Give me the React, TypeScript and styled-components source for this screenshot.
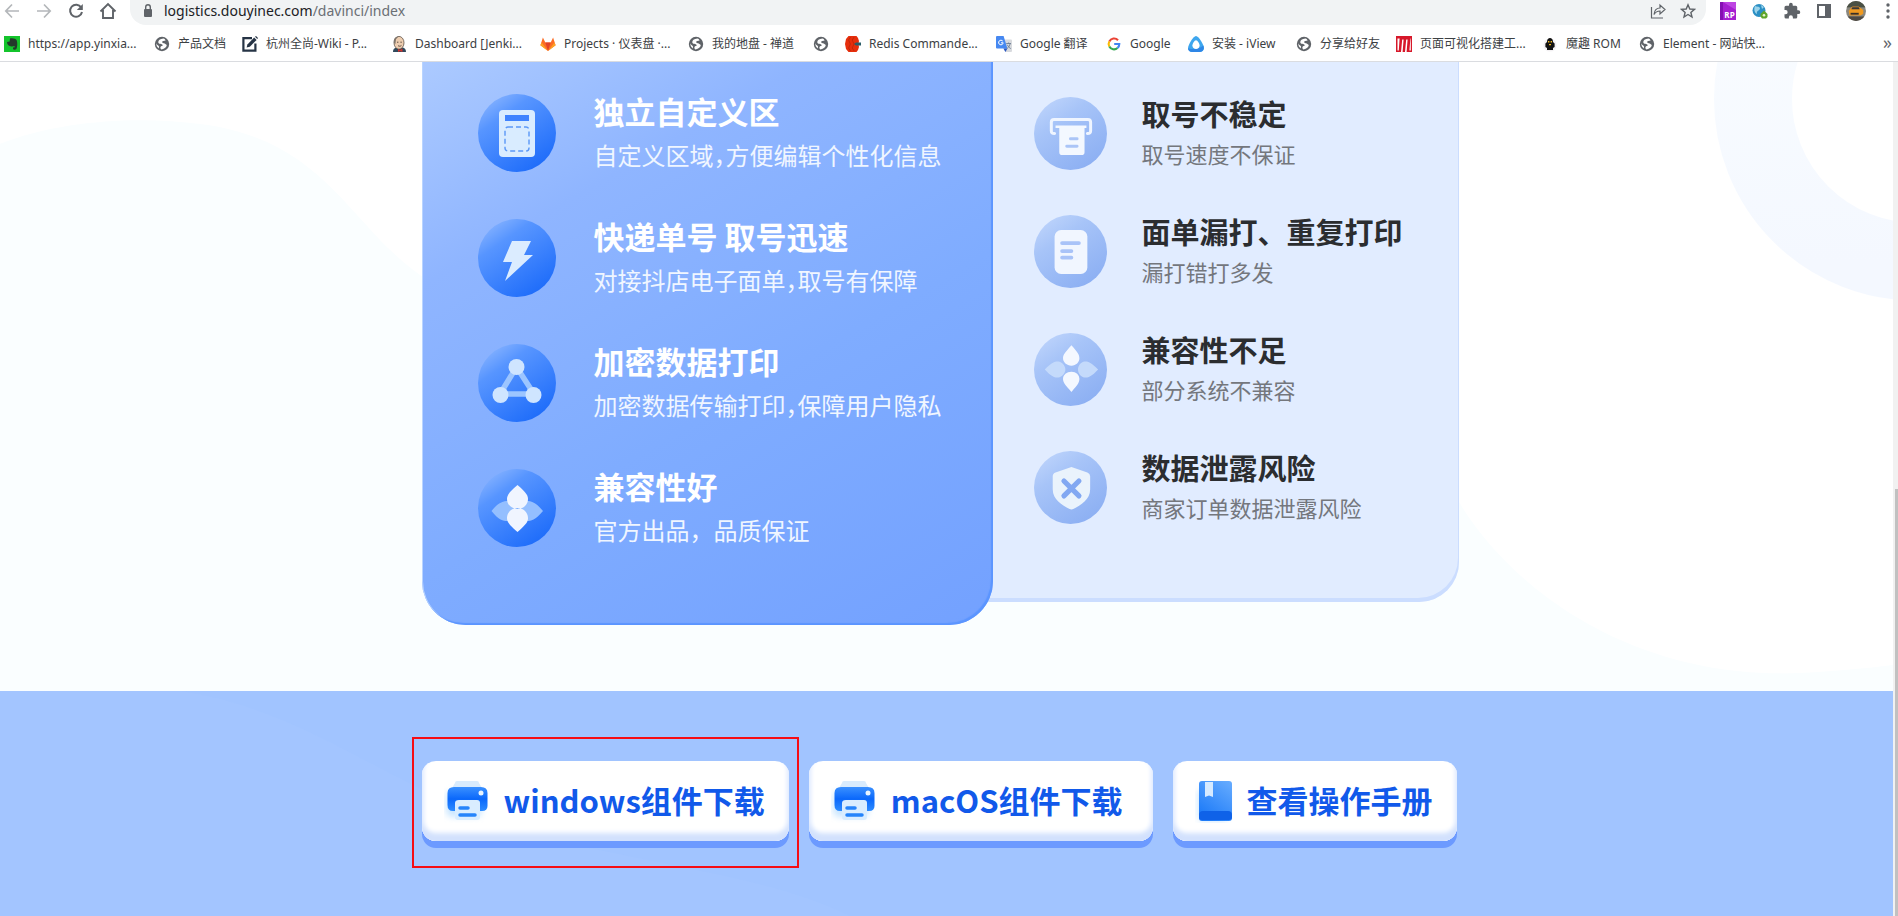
import React from 'react';
import styled, { createGlobalStyle } from 'styled-components';

const Global = createGlobalStyle`
  * { box-sizing: border-box; }
  html, body, #root { height: 100%; }
  body { margin: 0; overflow: hidden; background: #fff; font-family: "Noto Sans", "Noto Sans CJK SC", sans-serif; }
`;

const Page = styled.div`
  display: flex;
  flex-direction: column;
  height: 100%;
`;

const Toolbar = styled.header`
  display: flex;
  align-items: flex-start;
  height: 25px;
  background: #fff;
`;

const NavGroup = styled.nav`
  display: flex;
  gap: 12px;
  padding: 1px 12px 0 2px;
`;

const IconButton = styled.button`
  display: flex;
  align-items: center;
  justify-content: center;
  width: 20px;
  height: 20px;
  padding: 0;
  border: 0;
  background: none;
  color: #5f6368;
`;

const AddressBar = styled.form`
  display: flex;
  flex: 1;
  gap: 10px;
  height: 25px;
  margin: 0;
  padding: 0 8px 3px 12px;
  align-items: center;
  border-radius: 0 0 16px 16px;
  background: #f1f3f4;
`;

const AddressText = styled.a`
  flex: 1;
  font-family: "Noto Sans", sans-serif;
  font-size: 14px;
  line-height: 20px;
  color: #202124;
  text-decoration: none;
  span { color: #6b6f74; }
`;

const Extensions = styled.div`
  display: flex;
  align-items: center;
  gap: 12px;
  padding: 1px 0 0 12px;
`;

const Bookmarks = styled.nav`
  display: flex;
  align-items: center;
  height: 37px;
  padding: 1px 4px 0;
  border-bottom: 1px solid #dadce0;
  background: #fff;
`;

const Bookmark = styled.a<{ $width: number }>`
  display: flex;
  flex: 0 0 ${p => p.$width}px;
  align-items: center;
  gap: 8px;
  font-family: "Noto Sans", "Noto Sans CJK SC", sans-serif;
  font-size: 12px;
  line-height: 18px;
  white-space: nowrap;
  color: #3c4043;
  text-decoration: none;
  svg { flex: none; }
`;

const More = styled.button`
  margin-left: auto;
  padding: 0 2px 4px;
  border: 0;
  background: none;
  font-family: "Open Sans", sans-serif;
  font-size: 18px;
  line-height: 20px;
  color: #5f6368;
`;

const Viewport = styled.div`
  display: flex;
  flex: 1;
  min-height: 0;
`;

const Content = styled.div`
  display: flex;
  flex: 1;
  flex-direction: column;
  min-width: 0;
`;

const ScrollTrack = styled.div`
  display: flex;
  flex: 0 0 5px;
  flex-direction: column;
  justify-content: flex-end;
  background: #f1f1f1;
`;

const ScrollThumb = styled.div`
  height: 50%;
  margin-left: 2px;
  background: #c1c1c1;
`;

const Compare = styled.main`
  position: relative;
  padding-bottom: 66px;
`;

const Backdrop = styled.svg`
  position: absolute;
  inset: 0;
  width: 100%;
  height: 100%;
`;

const Container = styled.div`
  position: relative;
  display: flex;
  align-items: flex-start;
  width: 1050px;
  margin: 0 auto;
`;

const Card = styled.section<{ $strong?: boolean }>`
  position: relative;
  z-index: ${p => (p.$strong ? 1 : 0)};
  display: flex;
  flex-direction: column;
  width: ${p => (p.$strong ? 571 : 506)}px;
  margin-left: ${p => (p.$strong ? 0 : -40)}px;
  padding: ${p => (p.$strong ? '8px 0 55px 56px' : '12px 0 56px 81px')};
  border-radius: ${p => (p.$strong ? '0 0 44px 44px' : '0 0 40px 0')};
  background: ${p =>
    p.$strong ? 'linear-gradient(150deg, #accaff 0%, #8fb5ff 25%, #7facff 58%, #73a1ff 100%)' : '#e1ecff'};
  box-shadow: ${p =>
    p.$strong
      ? 'inset -2px -2px 1px #5b95ff, inset 1px 0 0 #b9d4ff'
      : 'inset -1px -4px 0 #cbddff'};
`;

const Feature = styled.article<{ $strong?: boolean }>`
  display: flex;
  align-items: center;
  gap: ${p => (p.$strong ? 38 : 35)}px;
  height: ${p => (p.$strong ? 125 : 118)}px;
`;

const FeatureIcon = styled.svg<{ $strong?: boolean }>`
  flex: none;
  width: ${p => (p.$strong ? 78 : 73)}px;
  height: ${p => (p.$strong ? 78 : 73)}px;
`;

const FeatureText = styled.div`
  display: flex;
  flex-direction: column;
  padding-bottom: 4px;
`;

const FeatureTitle = styled.h3<{ $strong?: boolean }>`
  margin: 0;
  font-family: "Noto Sans CJK SC", sans-serif;
  font-size: ${p => (p.$strong ? 31 : 29)}px;
  font-weight: 700;
  line-height: ${p => (p.$strong ? 48 : 44)}px;
  color: ${p => (p.$strong ? '#fff' : '#2b2d30')};
`;

const FeatureNote = styled.p<{ $strong?: boolean; $tight?: boolean }>`
  margin: 0;
  font-family: "Noto Sans CJK SC", sans-serif;
  font-size: ${p => (p.$strong ? 24 : 22)}px;
  line-height: ${p => (p.$strong ? 40 : 36)}px;
  font-feature-settings: ${p => (p.$tight ? '"halt"' : 'normal')};
  color: ${p => (p.$strong ? '#f0f6ff' : '#74777d')};
`;

const DownloadBand = styled.footer`
  position: relative;
  flex: 1;
  padding-top: 70px;
  background: #a1c4ff;
`;

const Actions = styled(Container)`
  gap: 20px;
`;

const ActionButton = styled.button<{ $roomy?: boolean }>`
  position: relative;
  display: flex;
  align-items: center;
  gap: 14px;
  height: 80px;
  padding: 0 ${p => (p.$roomy ? 30 : 24)}px 2px 22px;
  border: 0;
  border-radius: 14px;
  background: #fff;
  box-shadow: 0 7px 0 #6c9aff, inset 0 -8px 5px #d2e1fd, inset 3px -4px 4px #f1f6ff, inset -3px -4px 4px #f1f6ff;
  font-family: "Noto Sans CJK SC", sans-serif;
  font-size: 31px;
  font-weight: 700;
  line-height: 48px;
  white-space: nowrap;
  color: #1159ea;
  svg { flex: none; }
`;

const Highlight = styled.div`
  position: absolute;
  inset: -24px -10px -27px;
  border: 2px solid #f60d14;
  pointer-events: none;
`;

/* ---------- browser icons ---------- */

const S16 = (p: { children: React.ReactNode }) => (
  <svg width="16" height="16" viewBox="0 0 16 16" fill="none" aria-hidden="true">{p.children}</svg>
);

const GlobeIcon = () => (
  <S16>
    <circle cx="8" cy="8" r="7.2" fill="#5f6368" />
    <path d="M9.5 2.6 C6 3 4 4.4 4.3 6.4 C4.6 8.4 8 7.4 8.6 9 C9 10.3 6.6 10 6.4 11.4 C6.3 12.3 7 13 7.6 13.4 C10.6 13 12.7 11.2 12.8 9 C11.8 8.2 11.2 7.6 9.8 7.2 C8.4 6.8 7.6 6 8.6 5.2 C9.6 4.6 10.6 4.8 11.6 4.4 C11 3.4 10.4 2.8 9.5 2.6 Z" fill="#fff" />
    <path d="M2.4 7.2 C3 9.4 4.6 9.4 5 10.4 C5.2 11.4 4.6 11.6 4.8 12.4 C3 11 2.2 9.4 2.4 7.2 Z" fill="#fff" />
  </S16>
);

const bookmarks: { label: string; width: number; icon: React.ReactNode }[] = [
  {
    label: 'https://app.yinxia...', width: 150,
    icon: (
      <S16>
        <rect width="16" height="16" fill="#14c42c" />
        <path d="M6 2.5 C8 1.8 12 2.4 12.8 4.4 C13.6 7 13.4 11 12.4 13 C11.6 14.2 9 14 9 12.4 C9 11.4 10 11.2 10.8 11.4 L10.8 10.4 C9.4 10 8.6 10.6 8 10.4 C5 10.6 3.2 9 3 6 L5.6 5.6 Z" fill="#24382b" />
      </S16>
    ),
  },
  { label: '产品文档', width: 88, icon: <GlobeIcon /> },
  {
    label: '杭州全尚-Wiki - P...', width: 149,
    icon: (
      <S16>
        <path d="M10 2.2 H1.4 V14.6 H13.4 V7.5" stroke="#263445" strokeWidth="2.2" />
        <path d="M4.6 11.6 L5.4 8.4 L12.2 1.6 L14.6 4 L7.8 10.8 Z" fill="#263445" />
        <path d="M13 .8 L14 0 L16 2 L15.3 3.1 Z" fill="#263445" />
      </S16>
    ),
  },
  {
    label: 'Dashboard [Jenki...', width: 149,
    icon: (
      <S16>
        <path d="M2 16 C2 12.5 4 11.5 7 11.5 H11 C13.5 11.5 15 13 15 16 Z" fill="#31495c" />
        <ellipse cx="8" cy="6.8" rx="5" ry="6.4" fill="#edcdb0" stroke="#4b3d34" strokeWidth=".7" />
        <path d="M3 7 C2.4 3 4 .5 7.5 .4 L5 3.2 L4.4 8 Z" fill="#7f756d" />
        <path d="M6 6.2 H7.4 M9.4 6.2 H10.8 M7 9.6 C8 10.4 9.4 10.4 10.4 9.5" stroke="#4b3d34" strokeWidth=".9" />
        <path d="M7 13 L9 14 L11.4 12.6 V16 L9 15 L7 16 Z" fill="#d2322b" />
      </S16>
    ),
  },
  {
    label: 'Projects · 仪表盘 ·...', width: 148,
    icon: (
      <S16>
        <path d="M8 15 L.4 9.3 L2.9 1.4 L5.3 6.6 H10.7 L13.1 1.4 L15.6 9.3 Z" fill="#fc6d26" />
        <path d="M8 15 L5.3 6.6 H10.7 Z" fill="#e24329" />
        <path d="M.4 9.3 L1.6 6.6 L8 15 Z M15.6 9.3 L14.4 6.6 L8 15 Z" fill="#fca326" />
      </S16>
    ),
  },
  { label: '我的地盘 - 禅道', width: 125, icon: <GlobeIcon /> },
  { label: '', width: 32, icon: <GlobeIcon /> },
  {
    label: 'Redis Commande...', width: 151,
    icon: (
      <S16>
        <path d="M3.500 0 H11.500 L13 2 L14 5 L13.400 8 L14 11 L13 14 L11.500 16 H3.500 L1 13 L0 8 L1 3 Z" fill="#e62e0c" />
        <path d="M5.5 1 L3.6 4 L5.4 8 L3.6 12 L5.5 15 M9.2 1 L7.2 4 L9 8 L7.2 12 L9.2 15" stroke="#b92409" strokeWidth=".8" />
        <path d="M9 8 L11 6.500 H16 V9.500 H11 Z" fill="#2b5d68" />
      </S16>
    ),
  },
  {
    label: 'Google 翻译', width: 110,
    icon: (
      <S16>
        <path d="M6 3.5 H15 Q16 3.5 16 4.5 V15 Q16 16 15 16 H9.5 Z" fill="#d8dade" />
        <path d="M1 0 H7.6 L11.4 12.6 H1 Q0 12.6 0 11.6 V1 Q0 0 1 0 Z" fill="#4688f1" />
        <path d="M7.4 12.6 H11.4 L9.4 16 Z" fill="#2a57c0" />
        <path d="M6.8 5.2 A2.3 2.3 0 1 0 7.2 6.8 H5" stroke="#fff" strokeWidth="1" />
        <path d="M10.2 7.5 H15 M12.6 6.5 V7.5 M14.2 7.5 C13.6 10 12.6 11.4 11.2 12.4 M11.4 8.8 C12.2 10.6 13.4 11.8 14.8 12.6" stroke="#6d7f95" strokeWidth=".9" />
      </S16>
    ),
  },
  {
    label: 'Google', width: 82,
    icon: (
      <S16>
        <path d="M12 4.200 A5.300 5.300 0 0 0 3.300 5.500" stroke="#ea4335" strokeWidth="2.100" />
        <path d="M3.300 5.500 A5.300 5.300 0 0 0 3.300 10.500" stroke="#fbbc05" strokeWidth="2.100" />
        <path d="M3.300 10.500 A5.300 5.300 0 0 0 11.500 12" stroke="#34a853" strokeWidth="2.100" />
        <path d="M11.500 12 A5.300 5.300 0 0 0 13.300 8 H8.200" stroke="#4285f4" strokeWidth="2.100" />
      </S16>
    ),
  },
  {
    label: '安装 - iView', width: 108,
    icon: (
      <S16>
        <path d="M8 0 C10.8 0 16 9.4 16 12.2 C16 14.6 14 16 11.8 16 H4.2 C2 16 0 14.6 0 12.2 C0 9.4 5.2 0 8 0 Z" fill="#3ea6ee" />
        <path d="M4.2 16 C2 16 0 14.6 0 12.2 C2 13.4 11 13.4 15.4 9.4 C16.4 13 15 16 11.8 16 Z" fill="#2e86e6" />
        <path d="M8 4.2 C9.6 4.2 11.6 7.8 11.6 9.4 C11.6 11.5 10 12.9 8 12.9 C6 12.9 4.4 11.5 4.4 9.4 C4.4 7.8 6.4 4.2 8 4.2 Z" fill="#fff" />
      </S16>
    ),
  },
  { label: '分享给好友', width: 100, icon: <GlobeIcon /> },
  {
    label: '页面可视化搭建工...', width: 146,
    icon: (
      <S16>
        <rect width="16" height="16" fill="#d7182a" />
        <path d="M1.500 2.500 H3.600 L2.800 14.500 H1.500 Z M6.200 3.500 H7.600 L6.600 16 H5 Z M10.200 3.500 H11.600 L10.600 16 H9 Z M14.400 2.500 L13.400 14.500 H14.800 V2.500 Z" fill="#fff" />
      </S16>
    ),
  },
  {
    label: '魔趣 ROM', width: 97,
    icon: (
      <S16>
        <circle cx="8" cy="9" r="6.6" fill="#f3f1f3" />
        <path d="M5 6 C5 3 6.5 2 8 2 C9.5 2 11 3 11 6 L12.6 7.6 V11 L11 12 V14 H5 V12 L3.4 11 V7.6 Z" fill="#111" />
        <path d="M6 5 H7.4 V6.4 H6 Z M8.6 5 H10 V6.4 H8.6 Z M7 8 H9 V9.2 H7 Z" fill="#efb821" />
      </S16>
    ),
  },
  { label: 'Element - 网站快...', width: 130, icon: <GlobeIcon /> },
];

/* ---------- feature icons, drawn in a 78-unit disc ---------- */

type IconKind = 'panel' | 'bolt' | 'nodes' | 'petals' | 'slot' | 'note' | 'petalsApart' | 'shield';

const glyphs: Record<IconKind, React.ReactNode> = {
  panel: (
    <>
      <rect x="21" y="16" width="36" height="47" rx="4" fill="#d9ecff" />
      <rect x="27" y="21" width="24" height="6" fill="#3f83ff" />
      <rect x="27" y="33" width="24" height="24" rx="3" fill="none" stroke="#5b98f7" strokeWidth="1.4" strokeDasharray="5 3" />
    </>
  ),
  bolt: <path d="M34 22 H53 L46 36 H55 L27 62 L34 43 H25 Z" fill="#dbecff" />,
  nodes: (
    <>
      <path d="M38.5 23 L22 50 H56 Z" fill="none" stroke="#9cc5ff" strokeWidth="5.5" />
      <circle cx="38.5" cy="23" r="8" fill="#cfe5ff" />
      <circle cx="22.500" cy="51" r="8" fill="#cfe5ff" />
      <circle cx="55.500" cy="51" r="8" fill="#cfe5ff" />
    </>
  ),
  petals: (
    <>
      <path d="M13.500 42 C22 31 28 32 31 32 C36 33 39 37 39 42 C39 47 36 51 31 52 C27 52 22 53 13.500 42 Z M65 42 C56 31 51 32 48 32 C43 33 39 37 39 42 C39 47 43 51 48 52 C51 52 56 53 65 42 Z" fill="#94bfff" />
      <path d="M39.500 16 C49 24 50 27 50 30 C50 36 45 40 39.500 40 C34 40 29 36 29 30 C29 27 30 24 39.500 16 Z M39.500 63 C49 55 50 52 50 49 C50 43 45 39 39.500 39 C34 39 29 43 29 49 C29 52 30 55 39.500 63 Z" fill="#f0f5ff" />
    </>
  ),
  slot: (
    <>
      <path d="M22 39 C19 39 18.500 38 18.500 36 V27 Q18.500 24 21.500 24 H57.500 Q60.500 24 60.500 27 V36 C60.500 38 60 39 57 39" fill="none" stroke="#eff5ff" strokeWidth="3.200" strokeLinecap="round" />
      <path d="M23 30.500 H56 V33 H54 V59 Q54 62 51 62 H30 Q27 62 27 59 V33 H23 Z" fill="#f3f8ff" />
      <path d="M39 44.500 H46 M35 52.500 H46" stroke="#abc5f7" strokeWidth="3.200" strokeLinecap="round" />
    </>
  ),
  note: (
    <>
      <rect x="22" y="16" width="35" height="47" rx="7" fill="#f1f6ff" />
      <path d="M30 30 H48 M30 38.500 H40 M30 45.500 H40" stroke="#a9c3f8" strokeWidth="4" strokeLinecap="round" />
    </>
  ),
  petalsApart: (
    <>
      <path d="M11.500 39 C20 30 24 30 26 30.500 C30 31 33.500 35 33.500 39 C33.500 43 30 47 26 47.500 C23 48 20 48 11.500 39 Z M68.500 39 C60 30 56 30 54 30.500 C50 31 47 35 47 39 C47 43 50 47 54 47.500 C57 48 60 48 68.500 39 Z" fill="#c4dafb" />
      <path d="M40 13 C47 21 48.500 23 48.500 27 C48.500 31 45 35 40 35 C35 35 31 31 31 27 C31 23 33 21 40 13 Z M40 63 C47 55 48.500 53 48.500 49 C48.500 45 45 41.500 40 41.500 C35 41.500 31 45 31 49 C31 53 33 55 40 63 Z" fill="#f4f8ff" />
    </>
  ),
  shield: (
    <>
      <path d="M40 17 L57 23 Q60 24 60 27 V41 C60 52 50 58 42 62 Q40 63 38 62 C30 58 20 52 20 41 V27 Q20 24 23 23 Z" fill="#eaf3fc" />
      <path d="M32 32 L48 48 M48 32 L32 48" stroke="#82a8f2" strokeWidth="5.500" strokeLinecap="round" />
    </>
  ),
};

const Disc = ({ kind, strong }: { kind: IconKind; strong?: boolean }) => (
  <FeatureIcon $strong={strong} viewBox="0 0 78 78" aria-hidden="true">
    <circle cx="39" cy="39" r="39" fill={strong ? 'url(#discStrong)' : 'url(#discSoft)'} />
    {glyphs[kind]}
  </FeatureIcon>
);

const strengths: { kind: IconKind; title: string; note: string; tight?: boolean }[] = [
  { kind: 'panel', title: '独立自定义区', note: '自定义区域，方便编辑个性化信息', tight: true },
  { kind: 'bolt', title: '快递单号 取号迅速', note: '对接抖店电子面单，取号有保障', tight: true },
  { kind: 'nodes', title: '加密数据打印', note: '加密数据传输打印，保障用户隐私', tight: true },
  { kind: 'petals', title: '兼容性好', note: '官方出品，品质保证' },
];

const weaknesses: { kind: IconKind; title: string; note: string }[] = [
  { kind: 'slot', title: '取号不稳定', note: '取号速度不保证' },
  { kind: 'note', title: '面单漏打、重复打印', note: '漏打错打多发' },
  { kind: 'petalsApart', title: '兼容性不足', note: '部分系统不兼容' },
  { kind: 'shield', title: '数据泄露风险', note: '商家订单数据泄露风险' },
];

const PrinterIcon = () => (
  <svg width="46" height="46" viewBox="0 0 46 46" aria-hidden="true">
    <g filter="url(#iconGlow)" opacity=".55"><rect x="2" y="14" width="36" height="26" rx="6" fill="#9fd2ff" /></g>
    <path d="M13 4 H33 Q35 4 35 6 L38 11 H8 L11 6 Q11 4 13 4 Z" fill="#d8ebfd" />
    <path d="M10 10 H37 Q43.500 10 43.500 16 V29 Q43.500 34 38 34 H9 Q3.500 34 3.500 28 V16 Q3.500 10 10 10 Z" fill="url(#printerBody)" />
    <path d="M15 23 H33 Q36 23 36 26 V40 Q36 43 33 43 H14 Q11 43 11 40 V26 Q11 23 15 23 Z" fill="#d9edff" />
    <circle cx="37" cy="16" r="2.500" fill="#e9f5ff" />
    <path d="M16 31 H24 M16 38 H31" stroke="#2584fb" strokeWidth="3.500" strokeLinecap="round" />
  </svg>
);

const BookIcon = () => (
  <svg width="38" height="46" viewBox="2 0 38 46" aria-hidden="true">
    <g filter="url(#iconGlow)" opacity=".55"><rect x="5" y="12" width="30" height="32" rx="5" fill="#9fd2ff" /></g>
    <rect x="6" y="4" width="33" height="40" rx="3" fill="url(#bookCover)" />
    <path d="M10 34 H35 Q39 34 39 38 V40 Q39 43 36 43 H9 Q6 43 6 40 V38 Q6 34 10 34 Z" fill="#0f62e8" />
    <path d="M12 5 H20 V20 L16 18.500 L12 20 Z" fill="#d6eaff" />
  </svg>
);

const HiddenSvg = styled.svg`
  position: absolute;
`;

const SharedDefs = () => (
  <HiddenSvg width="0" height="0" aria-hidden="true">
    <defs>
      <linearGradient id="discStrong" x1=".15" y1=".08" x2=".75" y2=".95">
        <stop offset="0" stopColor="#82b0ff" /><stop offset=".25" stopColor="#5795ff" /><stop offset="1" stopColor="#1f6dfa" />
      </linearGradient>
      <linearGradient id="discSoft" x1=".15" y1=".08" x2=".75" y2=".95">
        <stop offset="0" stopColor="#bbd2fb" /><stop offset=".3" stopColor="#a7c4f8" /><stop offset="1" stopColor="#8db0f3" />
      </linearGradient>
      <linearGradient id="printerBody" x1="0" y1="0" x2="0" y2="1">
        <stop offset="0" stopColor="#3a90ff" /><stop offset=".5" stopColor="#0b68fb" /><stop offset="1" stopColor="#2d8cff" />
      </linearGradient>
      <linearGradient id="bookCover" x1="1" y1="0" x2=".4" y2="1">
        <stop offset="0" stopColor="#68adff" /><stop offset="1" stopColor="#1f7cf8" />
      </linearGradient>
      <filter id="iconGlow" x="-30%" y="-30%" width="160%" height="160%"><feGaussianBlur stdDeviation="3" /></filter>
    </defs>
  </HiddenSvg>
);

export default function App() {
  return (
    <Page>
      <Global />
      <SharedDefs />
      <Toolbar>
        <NavGroup aria-label="Navigation">
          <IconButton aria-label="Back">
            <svg width="16" height="16" viewBox="0 0 16 16" fill="none" stroke="#b4b7ba" strokeWidth="1.700"><path d="M15 8 H2 M8 1.500 L1.800 8 L8 14.500" /></svg>
          </IconButton>
          <IconButton aria-label="Forward">
            <svg width="16" height="16" viewBox="0 0 16 16" fill="none" stroke="#b4b7ba" strokeWidth="1.700"><path d="M1 8 H14 M8 1.500 L14.200 8 L8 14.500" /></svg>
          </IconButton>
          <IconButton aria-label="Reload">
            <svg width="16" height="16" viewBox="0 0 16 16" fill="none" stroke="#5f6368" strokeWidth="2"><path d="M13.200 4.500 A6 6 0 1 0 14 9" /><path d="M14.800 1 V7 H8.800 Z" fill="#5f6368" stroke="none" /></svg>
          </IconButton>
          <IconButton aria-label="Home">
            <svg width="18" height="18" viewBox="0 0 18 18" fill="none" stroke="#5f6368" strokeWidth="1.900"><path d="M1.500 9.500 L9 2 L16.500 9.500 M4 8 V16 H14 V8" /></svg>
          </IconButton>
        </NavGroup>
        <AddressBar>
          <svg width="12" height="16" viewBox="0 0 12 16" fill="none" aria-hidden="true"><rect x="2" y="6" width="8" height="8" rx="1" fill="#5f6368" /><path d="M3.700 6 V4 A2.300 2.300 0 0 1 8.300 4 V6" stroke="#5f6368" strokeWidth="1.400" /></svg>
          <AddressText href="#">logistics.douyinec.com<span>/davinci/index</span></AddressText>
          <IconButton type="button" aria-label="Share">
            <svg width="16" height="16" viewBox="0 0 16 16" fill="none" stroke="#5f6368" strokeWidth="1.200"><path d="M1.500 4 V15 H13" /><path d="M4 11.500 C4.500 7 6.500 5 10 5 V2 L15 6.500 L10 11 V8 C7.500 8 5.500 9 4 11.500 Z" /></svg>
          </IconButton>
          <IconButton type="button" aria-label="Bookmark this page">
            <svg width="16" height="16" viewBox="0 0 16 16" fill="none" stroke="#5f6368" strokeWidth="1.400"><path d="M8 1.800 L9.800 6 L14.400 6.400 L10.900 9.400 L12 14 L8 11.500 L4 14 L5.100 9.400 L1.600 6.400 L6.200 6 Z" /></svg>
          </IconButton>
        </AddressBar>
        <Extensions>
          <IconButton aria-label="RP extension">
            <svg width="16" height="18" viewBox="0 0 16 18"><rect width="16" height="18" fill="#a51fd0" /><rect width="3" height="18" fill="#8410b2" /><path d="M3 0 H16 V8 Z" fill="#bd45e2" /><text x="9.500" y="16" textAnchor="middle" fontFamily="Open Sans, sans-serif" fontSize="8" fontWeight="700" fill="#fff">RP</text></svg>
          </IconButton>
          <IconButton aria-label="Web proxy extension">
            <svg width="16" height="16" viewBox="0 0 16 16" fill="none"><circle cx="7" cy="7.500" r="6.500" fill="#2b8fc4" /><path d="M3 3 C5 4 7 3 8 5 C8 8 4 7 5 11 C2.500 10 1.500 6 3 3 Z M9 2 L12 4 L10 6 Z" fill="#9bd3ea" /><path d="M12 7.500 L15.500 11 V14 L14 15.500 H10 L8.500 13.500 V11 Z" fill="#5fa52a" /><circle cx="12" cy="12.300" r="1.300" fill="#e6f2cf" /></svg>
          </IconButton>
          <IconButton aria-label="Extensions">
            <svg width="18" height="18" viewBox="0 0 24 24" fill="#5f6368"><path d="M20.500 11H19V7a2 2 0 0 0-2-2h-4V3.500a2.500 2.500 0 0 0-5 0V5H4a2 2 0 0 0-2 2v3.800h1.500a2.700 2.700 0 0 1 0 5.400H2V20a2 2 0 0 0 2 2h3.800v-1.500a2.700 2.700 0 0 1 5.400 0V22H17a2 2 0 0 0 2-2v-4h1.500a2.500 2.500 0 0 0 0-5z" /></svg>
          </IconButton>
          <IconButton aria-label="Side panel">
            <svg width="16" height="16" viewBox="0 0 16 16"><path d="M1 1 H15 V15 H1 Z M3 3 V13 H9 V3 Z" fill="#5f6368" fillRule="evenodd" /></svg>
          </IconButton>
          <IconButton aria-label="Profile">
            <svg width="22" height="22" viewBox="0 0 22 22"><defs><clipPath id="avatar"><circle cx="11" cy="11" r="11" /></clipPath></defs><g clipPath="url(#avatar)"><rect width="22" height="22" fill="#8a8880" /><rect width="22" height="7" fill="#4a5044" /><path d="M3 11 L6 7 H15 L19 10 V14 L16 16 H4 Z" fill="#f09a20" /><path d="M7 6 H14 L16 9 H5 Z" fill="#d8862a" /><path d="M7 7 H14 L15 9 H6 Z" fill="#3a3a38" /><rect x="5" y="13" width="9" height="2" fill="#37302a" /><rect y="17" width="22" height="5" fill="#4e4a44" /></g></svg>
          </IconButton>
          <IconButton aria-label="Menu">
            <svg width="4" height="16" viewBox="0 0 4 16" fill="#5f6368"><circle cx="2" cy="2" r="1.700" /><circle cx="2" cy="8" r="1.700" /><circle cx="2" cy="14" r="1.700" /></svg>
          </IconButton>
        </Extensions>
      </Toolbar>
      <Bookmarks aria-label="Bookmarks">
        {bookmarks.map((b, i) => (
          <Bookmark key={i} href="#" $width={b.width} aria-label={b.label || 'Bookmark'}>
            {b.icon}
            {b.label}
          </Bookmark>
        ))}
        <More aria-label="More bookmarks">»</More>
      </Bookmarks>
      <Viewport>
        <Content>
          <Compare>
            <Backdrop viewBox="0 0 1893 630" preserveAspectRatio="none" aria-hidden="true">
              <defs>
                <linearGradient id="ring" x1="0" y1="0" x2="0" y2="1"><stop offset="0" stopColor="#fafdff" /><stop offset="1" stopColor="#f4f8ff" /></linearGradient>
              </defs>
              <path d="M0 82 C60 58 140 54 200 62 C330 78 350 170 430 220 L1440 400 C1470 490 1600 620 1800 612 C1840 610 1870 607 1893 604 V630 H0 Z" fill="#fafeff" />
              <circle cx="1916" cy="37" r="163" fill="none" stroke="url(#ring)" strokeWidth="78" />
            </Backdrop>
            <Container>
              <Card $strong>
                {strengths.map(f => (
                  <Feature key={f.title} $strong>
                    <Disc kind={f.kind} strong />
                    <FeatureText>
                      <FeatureTitle $strong>{f.title}</FeatureTitle>
                      <FeatureNote $strong $tight={f.tight}>{f.note}</FeatureNote>
                    </FeatureText>
                  </Feature>
                ))}
              </Card>
              <Card>
                {weaknesses.map(f => (
                  <Feature key={f.title}>
                    <Disc kind={f.kind} />
                    <FeatureText>
                      <FeatureTitle>{f.title}</FeatureTitle>
                      <FeatureNote>{f.note}</FeatureNote>
                    </FeatureText>
                  </Feature>
                ))}
              </Card>
            </Container>
          </Compare>
          <DownloadBand>
            <Backdrop viewBox="0 0 1893 224" preserveAspectRatio="none" aria-hidden="true">
              <path d="M180 0 C320 20 400 110 560 150 C700 180 780 190 850 224 H0 V0 Z" fill="#a3c5ff" />
            </Backdrop>
            <Actions>
              <ActionButton>
                <PrinterIcon />windows组件下载
                <Highlight />
              </ActionButton>
              <ActionButton $roomy><PrinterIcon />macOS组件下载</ActionButton>
              <ActionButton><BookIcon />查看操作手册</ActionButton>
            </Actions>
          </DownloadBand>
        </Content>
        <ScrollTrack aria-hidden="true"><ScrollThumb /></ScrollTrack>
      </Viewport>
    </Page>
  );
}
